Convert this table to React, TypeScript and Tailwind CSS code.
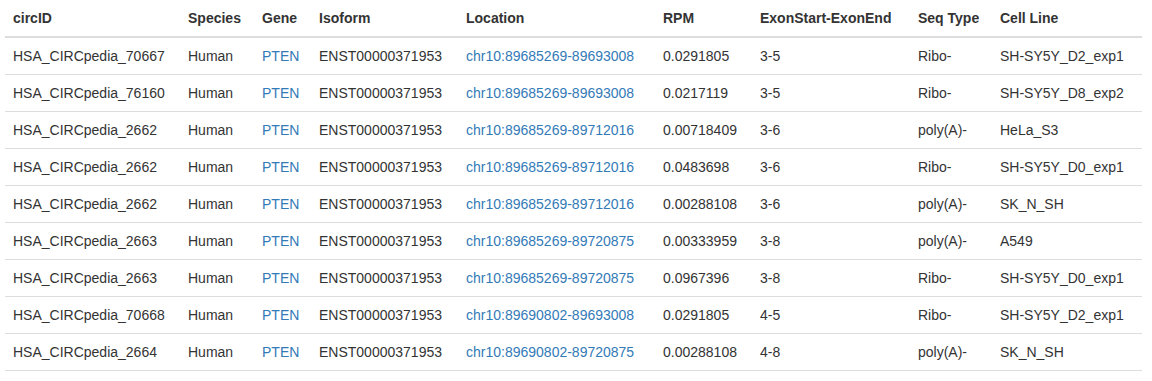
import React from "react";

const rows = [
  ["HSA_CIRCpedia_70667", "chr10:89685269-89693008", "0.0291805", "3-5", "Ribo-", "SH-SY5Y_D2_exp1"],
  ["HSA_CIRCpedia_76160", "chr10:89685269-89693008", "0.0217119", "3-5", "Ribo-", "SH-SY5Y_D8_exp2"],
  ["HSA_CIRCpedia_2662", "chr10:89685269-89712016", "0.00718409", "3-6", "poly(A)-", "HeLa_S3"],
  ["HSA_CIRCpedia_2662", "chr10:89685269-89712016", "0.0483698", "3-6", "Ribo-", "SH-SY5Y_D0_exp1"],
  ["HSA_CIRCpedia_2662", "chr10:89685269-89712016", "0.00288108", "3-6", "poly(A)-", "SK_N_SH"],
  ["HSA_CIRCpedia_2663", "chr10:89685269-89720875", "0.00333959", "3-8", "poly(A)-", "A549"],
  ["HSA_CIRCpedia_2663", "chr10:89685269-89720875", "0.0967396", "3-8", "Ribo-", "SH-SY5Y_D0_exp1"],
  ["HSA_CIRCpedia_70668", "chr10:89690802-89693008", "0.0291805", "4-5", "Ribo-", "SH-SY5Y_D2_exp1"],
  ["HSA_CIRCpedia_2664", "chr10:89690802-89720875", "0.00288108", "4-8", "poly(A)-", "SK_N_SH"],
];

const headers = ["circID", "Species", "Gene", "Isoform", "Location", "RPM", "ExonStart-ExonEnd", "Seq Type", "Cell Line"];
const widths = [175, 74, 57, 147, 197, 97, 158, 82, 150];

export default function App() {
  return (
    <div className="bg-white w-[1152px] h-[381px] overflow-hidden pl-[5px] font-['Liberation_Sans',Arial,sans-serif] text-[14px] leading-[20px] text-[#333]">
      <table className="table-fixed border-collapse w-[1137px] text-left">
        <colgroup>
          {widths.map((w, i) => (
            <col key={i} style={{ width: w }} />
          ))}
        </colgroup>
        <thead>
          <tr>
            {headers.map((h) => (
              <th key={h} className="p-[8px] font-bold border-b-2 border-[#ddd] whitespace-nowrap align-bottom">
                {h}
              </th>
            ))}
          </tr>
        </thead>
        <tbody>
          {rows.map((r, i) => (
            <tr key={i}>
              <td className="p-[8px] border-b border-[#ddd] whitespace-nowrap">{r[0]}</td>
              <td className="p-[8px] border-b border-[#ddd]">Human</td>
              <td className="p-[8px] border-b border-[#ddd]">
                <a className="text-[#337ab7]">PTEN</a>
              </td>
              <td className="p-[8px] border-b border-[#ddd]">ENST00000371953</td>
              <td className="p-[8px] border-b border-[#ddd]">
                <a className="text-[#337ab7]">{r[1]}</a>
              </td>
              <td className="p-[8px] border-b border-[#ddd]">{r[2]}</td>
              <td className="p-[8px] border-b border-[#ddd]">{r[3]}</td>
              <td className="p-[8px] border-b border-[#ddd]">{r[4]}</td>
              <td className="p-[8px] border-b border-[#ddd] whitespace-nowrap">{r[5]}</td>
            </tr>
          ))}
        </tbody>
      </table>
    </div>
  );
}
